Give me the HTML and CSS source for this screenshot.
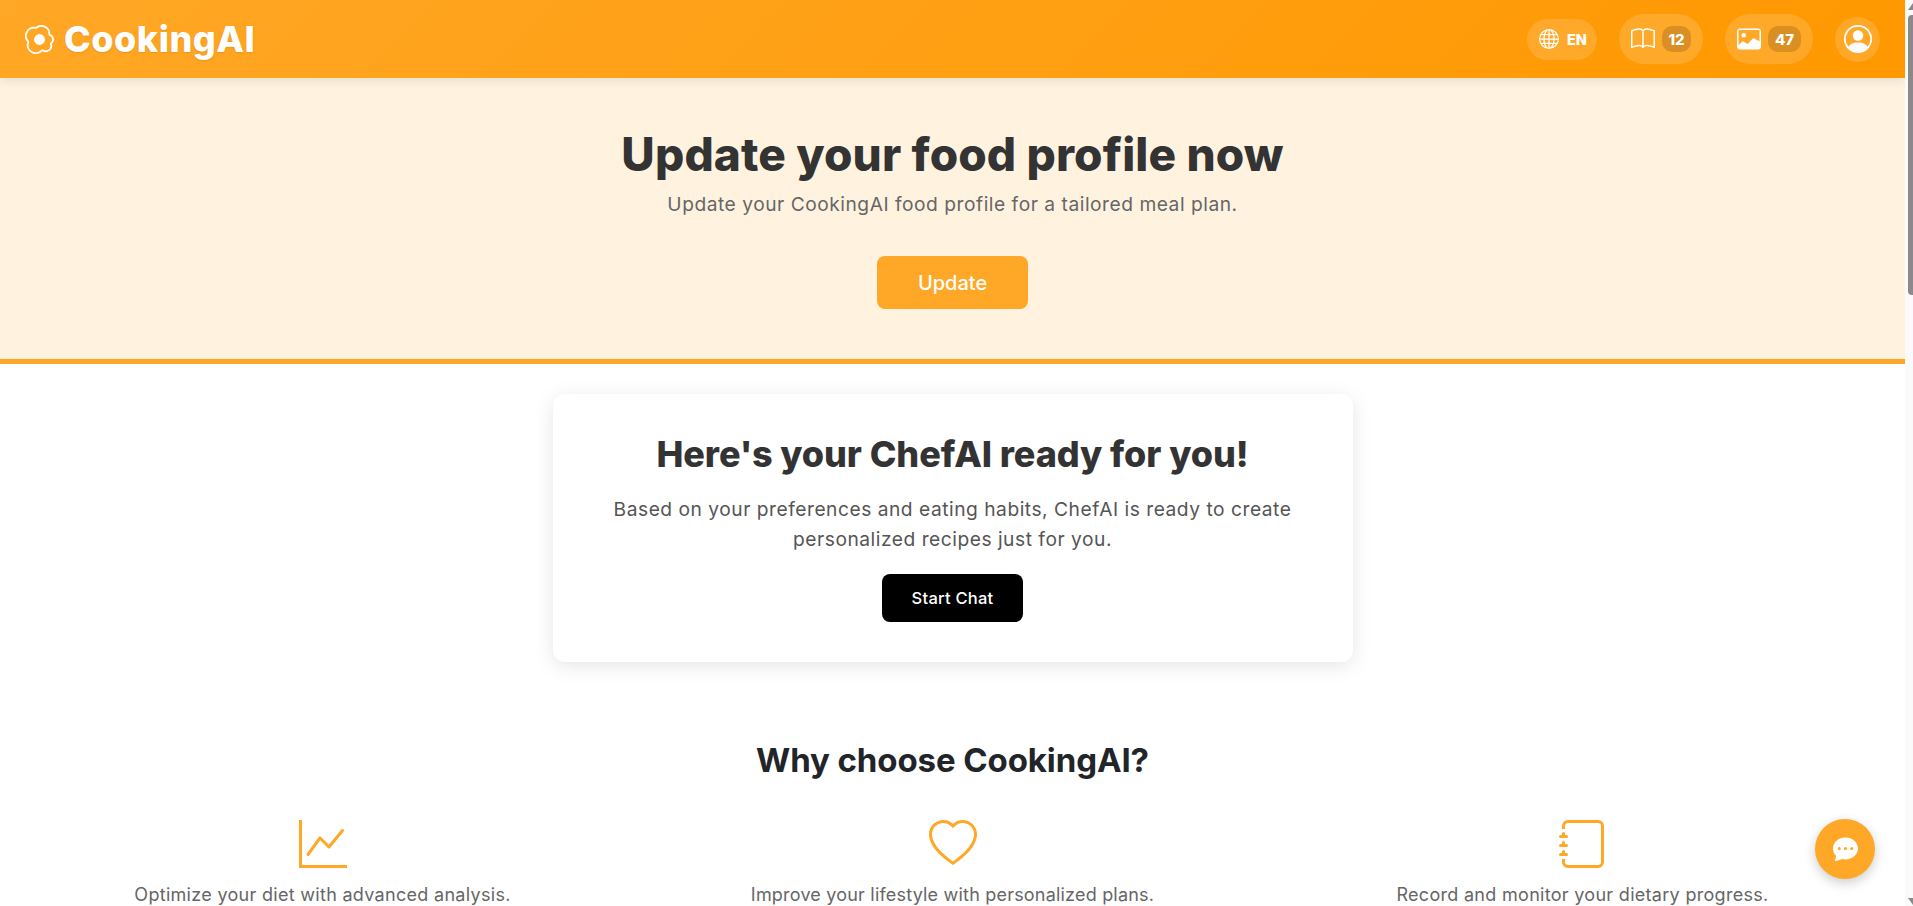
FILE: index.html
```html
<!DOCTYPE html>
<html lang="en">
<head>
<meta charset="utf-8">
<title>CookingAI</title>
<link rel="stylesheet" href="styles.css">
</head>
<body>
<div class="page">
  <main class="main">
    <header class="topbar">
      <a class="brand">
        <svg class="brand-icon" viewBox="0 0 16 16" fill="currentColor"><path d="M8 11a3 3 0 1 0 0-6 3 3 0 0 0 0 6z"/><path d="M13.997 5.17a5 5 0 0 0-8.101-4.09A5 5 0 0 0 1.28 9.342a5 5 0 0 0 8.336 5.109 3.5 3.5 0 0 0 5.201-4.065 3.001 3.001 0 0 0-.822-5.216zm-1-.034a1 1 0 0 0 .668.977 2.001 2.001 0 0 1 .547 3.478 1 1 0 0 0-.341 1.113 2.5 2.5 0 0 1-3.715 2.905 1 1 0 0 0-1.262.152 4 4 0 0 1-6.67-4.087 1 1 0 0 0-.2-1 4 4 0 0 1 3.693-6.61 1 1 0 0 0 .8-.2 4 4 0 0 1 6.48 3.273z"/></svg>
        <span class="brand-name">CookingAI</span>
      </a>
      <nav class="actions">
        <div class="pill pill-lang">
          <svg class="icon-globe" viewBox="0 0 16 16" fill="currentColor"><path d="M0 8a8 8 0 1 1 16 0A8 8 0 0 1 0 8zm7.5-6.923c-.67.204-1.335.82-1.887 1.855A7.97 7.97 0 0 0 5.145 4H7.5V1.077zM4.09 4a9.267 9.267 0 0 1 .64-1.539 6.7 6.7 0 0 1 .597-.933A7.025 7.025 0 0 0 2.255 4H4.09zm-.582 3.5c.03-.877.138-1.718.312-2.5H1.674a6.958 6.958 0 0 0-.656 2.5h2.49zM4.847 5a12.5 12.5 0 0 0-.338 2.5H7.5V5H4.847zM8.5 5v2.5h2.99a12.495 12.495 0 0 0-.337-2.5H8.5zM4.51 8.5a12.5 12.5 0 0 0 .337 2.5H7.5V8.5H4.51zm3.99 0V11h2.653c.187-.765.306-1.608.338-2.5H8.5zM5.145 12c.138.386.295.744.468 1.068.552 1.035 1.218 1.65 1.887 1.855V12H5.145zm.182 2.472a6.696 6.696 0 0 1-.597-.933A9.268 9.268 0 0 1 4.09 12H2.255a7.024 7.024 0 0 0 3.072 2.472zM3.82 11a13.652 13.652 0 0 1-.312-2.5h-2.49c.062.89.291 1.733.656 2.5H3.82zm6.853 3.472A7.024 7.024 0 0 0 13.745 12H11.91a9.27 9.27 0 0 1-.64 1.539 6.688 6.688 0 0 1-.597.933zM8.5 12v2.923c.67-.204 1.335-.82 1.887-1.855.173-.324.33-.682.468-1.068H8.5zm3.68-1h2.146c.365-.767.594-1.61.656-2.5h-2.49a13.65 13.65 0 0 1-.312 2.5zm2.802-3.5a6.959 6.959 0 0 0-.656-2.5H12.18c.174.782.282 1.623.312 2.5h2.49zM11.27 2.461c.247.464.462.98.64 1.539h1.835a7.024 7.024 0 0 0-3.072-2.472c.218.284.418.598.597.933zM10.855 4a7.966 7.966 0 0 0-.468-1.068C9.835 1.897 9.17 1.282 8.5 1.077V4h2.355z"/></svg>
          <span class="lang">EN</span>
        </div>
        <div class="pill pill-count">
          <svg class="icon-24" viewBox="0 0 16 16" fill="currentColor"><path d="M1 2.828c.885-.37 2.154-.769 3.388-.893 1.33-.134 2.458.063 3.112.752v9.746c-.935-.53-2.12-.603-3.213-.493-1.18.12-2.37.461-3.287.811V2.828zm7.5-.141c.654-.689 1.782-.886 3.112-.752 1.234.124 2.503.523 3.388.893v9.923c-.918-.35-2.107-.692-3.287-.81-1.094-.111-2.278-.039-3.213.492V2.687zM8 1.783C7.015.936 5.587.81 4.287.94c-1.514.153-3.042.672-3.994 1.105A.5.5 0 0 0 0 2.5v11a.5.5 0 0 0 .707.455c.882-.4 2.303-.881 3.68-1.02 1.409-.142 2.59.087 3.223.877a.5.5 0 0 0 .78 0c.633-.79 1.814-1.019 3.222-.877 1.378.139 2.8.62 3.681 1.02A.5.5 0 0 0 16 13.5v-11a.5.5 0 0 0-.293-.455c-.952-.433-2.48-.952-3.994-1.105C10.413.809 8.985.936 8 1.783z"/></svg>
          <span class="badge badge-book">12</span>
        </div>
        <div class="pill pill-count">
          <svg class="icon-24" viewBox="0 0 16 16" fill="currentColor"><path fill-rule="evenodd" d="M2 1a2 2 0 0 0-2 2v10a2 2 0 0 0 2 2h12a2 2 0 0 0 2-2V3a2 2 0 0 0-2-2H2zm12.5 1a.5.5 0 0 1 .5.5v7l-3.777-1.947a.5.5 0 0 0-.577.093l-3.71 3.71-2.66-1.772a.5.5 0 0 0-.63.062L1 12V2.5a.5.5 0 0 1 .5-.5h13z"/><circle cx="4.5" cy="5.5" r="1.5"/></svg>
          <span class="badge badge-image">47</span>
        </div>
        <div class="avatar">
          <svg class="icon-person" viewBox="0 0 16 16" fill="currentColor"><path d="M11 6a3 3 0 1 1-6 0 3 3 0 0 1 6 0z"/><path fill-rule="evenodd" d="M0 8a8 8 0 1 1 16 0A8 8 0 0 1 0 8zm8-7a7 7 0 0 0-5.468 11.37C3.242 11.226 4.805 10 8 10s4.757 1.225 5.468 2.37A7 7 0 0 0 8 1z"/></svg>
        </div>
      </nav>
    </header>

    <section class="banner">
      <h1 class="banner-title">Update your food profile now</h1>
      <p class="banner-text">Update your CookingAI food profile for a tailored meal plan.</p>
      <button class="btn-update">Update</button>
    </section>

    <section class="card">
      <h2 class="card-title">Here's your ChefAI ready for you!</h2>
      <p class="card-text">Based on your preferences and eating habits, ChefAI is ready to create personalized recipes just for you.</p>
      <button class="btn-chat">Start Chat</button>
    </section>

    <section class="why">
      <h2 class="why-title">Why choose CookingAI?</h2>
      <div class="features">
        <div class="feature">
          <svg class="feature-icon" viewBox="0 0 16 16" fill="currentColor"><path fill-rule="evenodd" d="M0 0h1v15h15v1H0V0Zm14.817 3.113a.5.5 0 0 1 .07.704l-4.5 5.5a.5.5 0 0 1-.74.037L7.06 6.767l-3.656 5.027a.5.5 0 0 1-.808-.588l4-5.5a.5.5 0 0 1 .758-.06l2.609 2.61 4.15-5.073a.5.5 0 0 1 .704-.07Z"/></svg>
          <p class="feature-text">Optimize your diet with advanced analysis.</p>
        </div>
        <div class="feature">
          <svg class="feature-icon" viewBox="0 0 16 16" fill="currentColor"><path d="m8 2.748-.717-.737C5.6.281 2.514.878 1.4 3.053c-.523 1.023-.641 2.5.314 4.385.92 1.815 2.834 3.989 6.286 6.357 3.452-2.368 5.365-4.542 6.286-6.357.955-1.886.838-3.362.314-4.385C13.486.878 10.4.28 8.717 2.01L8 2.748zM8 15C-7.333 4.868 3.279-3.04 7.824 1.143c.06.055.119.112.176.171a3.12 3.12 0 0 1 .176-.17C12.72-3.042 23.333 4.867 8 15z"/></svg>
          <p class="feature-text feature-text-tight">Improve your lifestyle with personalized plans.</p>
        </div>
        <div class="feature">
          <svg class="feature-icon" viewBox="0 0 16 16" fill="currentColor"><path d="M3 0h10a2 2 0 0 1 2 2v12a2 2 0 0 1-2 2H3a2 2 0 0 1-2-2v-1h1v1a1 1 0 0 0 1 1h10a1 1 0 0 0 1-1V2a1 1 0 0 0-1-1H3a1 1 0 0 0-1 1v1H1V2a2 2 0 0 1 2-2z"/><path d="M1 5v-.5a.5.5 0 0 1 1 0V5h.5a.5.5 0 0 1 0 1h-2a.5.5 0 0 1 0-1H1zm0 3v-.5a.5.5 0 0 1 1 0V8h.5a.5.5 0 0 1 0 1h-2a.5.5 0 0 1 0-1H1zm0 3v-.5a.5.5 0 0 1 1 0v.5h.5a.5.5 0 0 1 0 1h-2a.5.5 0 0 1 0-1H1z"/></svg>
          <p class="feature-text">Record and monitor your dietary progress.</p>
        </div>
      </div>
    </section>

    <button class="chat-fab" aria-label="Chat">
      <svg class="fab-icon" viewBox="0 0 16 16" fill="currentColor"><path d="M16 8c0 3.866-3.582 7-8 7a9.06 9.06 0 0 1-2.347-.306c-.584.296-1.925.864-4.181 1.234-.2.032-.352-.176-.273-.362.354-.836.674-1.95.77-2.966C.744 11.37 0 9.76 0 8c0-3.866 3.582-7 8-7s8 3.134 8 7zM5 8a1 1 0 1 0-2 0 1 1 0 0 0 2 0zm4 0a1 1 0 1 0-2 0 1 1 0 0 0 2 0zm3 1a1 1 0 1 0 0-2 1 1 0 0 0 0 2z"/></svg>
    </button>
  </main>

  <aside class="scrollbar" aria-hidden="true">
    <span class="sb-up"></span>
    <span class="sb-thumb"></span>
    <span class="sb-down"></span>
  </aside>
</div>
</body>
</html>
```
FILE: styles.css
```css
* { box-sizing: border-box; }
html, body { margin: 0; height: 100%; overflow: hidden; background: #fff; }
body { font-family: Inter, "Open Sans", sans-serif; color: #333; }
h1, h2, p { margin: 0; }
button { font-family: inherit; border: 0; cursor: pointer; }

.page { display: flex; height: 906px; }
.main { position: relative; flex: 1; min-width: 0; overflow: hidden; }

.topbar {
  position: relative;
  z-index: 2;
  height: 78px;
  padding: 0 25px;
  display: flex;
  align-items: center;
  justify-content: space-between;
  color: #fff;
  background: linear-gradient(135deg, #ffa726, #ff9800);
  box-shadow: 0 2px 10px rgba(0, 0, 0, .1);
}
.brand { display: flex; align-items: center; gap: 10px; }
.brand-icon { width: 29px; height: 29px; }
.brand-name { font-size: 36px; font-weight: 800; letter-spacing: .5px; text-shadow: 0 1px 2px rgba(0, 0, 0, .1); }

.actions { display: flex; align-items: center; gap: 22px; }
.pill {
  display: flex;
  align-items: center;
  background: rgba(255, 255, 255, .15);
  border-radius: 25px;
}
.pill-lang { height: 41px; width: 70px; padding-left: 12px; gap: 8px; }
.pill-count { height: 50px; padding: 0 12px; gap: 7px; }
.icon-globe { width: 20px; height: 20px; }
.icon-24 { width: 24px; height: 24px; }
.lang { font-size: 14.5px; font-weight: 800; }
.badge {
  height: 26px;
  display: flex;
  align-items: center;
  justify-content: center;
  background: rgba(0, 0, 0, .15);
  border-radius: 10px;
  font-size: 15px;
  font-weight: 800;
}
.badge-book { width: 29px; }
.badge-image { width: 33px; }
.avatar {
  width: 45px;
  height: 45px;
  display: flex;
  align-items: center;
  justify-content: center;
  border-radius: 50%;
  background: rgba(255, 255, 255, .15);
}
.icon-person { width: 28px; height: 28px; }

.banner {
  height: 286px;
  padding-top: 45px;
  text-align: center;
  background: #fff3e0;
  border-bottom: 5px solid #ffa726;
}
.banner-title { font-size: 46px; line-height: 62px; font-weight: 800; letter-spacing: .12px; color: #333; }
.banner-text { margin-top: 6px; font-size: 19.2px; line-height: 27px; letter-spacing: .52px; color: #666; }
.btn-update {
  display: block;
  width: 151px;
  height: 53px;
  margin: 38px auto 0;
  border-radius: 8px;
  background: #ffa726;
  color: #fff;
  font-size: 20px;
  font-weight: 500;
}

.card {
  width: 800px;
  height: 268px;
  margin: 30px auto 0;
  padding-top: 35px;
  text-align: center;
  background: #fff;
  border-radius: 12px;
  box-shadow: 0 4px 20px rgba(0, 0, 0, .1);
}
.card-title { font-size: 36px; line-height: 50px; font-weight: 800; letter-spacing: -.08px; color: #333; }
.card-text { width: 740px; margin: 15px auto 0; font-size: 19.2px; line-height: 30px; letter-spacing: .52px; color: #555; }
.btn-chat {
  display: block;
  width: 141px;
  height: 48px;
  margin: 20px auto 0;
  padding-bottom: 2px;
  border-radius: 8px;
  background: #000;
  color: #fff;
  font-size: 16.5px;
  font-weight: 500;
  letter-spacing: .25px;
}

.why { margin-top: 75px; }
.why-title { text-align: center; font-size: 33px; line-height: 46px; font-weight: 700; letter-spacing: -.1px; color: #212529; }
.features { display: grid; grid-template-columns: repeat(3, 630px); justify-content: center; margin-top: 37px; }
.feature { display: flex; flex-direction: column; align-items: center; }
.feature-icon { width: 48px; height: 48px; color: #ffa726; }
.feature-text { margin-top: 14px; font-size: 18px; line-height: 26px; letter-spacing: .3px; color: #666; }
.feature-text-tight { letter-spacing: .2px; }

.chat-fab {
  position: absolute;
  right: 30px;
  bottom: 27px;
  width: 60px;
  height: 60px;
  padding: 0 0 2px;
  display: flex;
  align-items: center;
  justify-content: center;
  border-radius: 50%;
  color: #fff;
  background: #ffa726;
  box-shadow: 0 4px 12px rgba(0, 0, 0, .2);
}
.fab-icon { width: 25px; height: 25px; }

.scrollbar {
  width: 8px;
  height: 906px;
  display: flex;
  flex-direction: column;
  align-items: flex-end;
  background: #fafafa;
}
.sb-up, .sb-down { width: 5px; height: 7px; background: #8a8a8a; }
.sb-up { margin-top: 3px; clip-path: polygon(100% 0, 100% 100%, 0 100%); }
.sb-thumb { width: 5px; height: 280px; margin-top: 5px; background: #8a8a8a; border-radius: 4px 0 0 4px; }
.sb-down { margin-top: auto; margin-bottom: 1px; clip-path: polygon(0 0, 100% 0, 100% 100%); }
```
